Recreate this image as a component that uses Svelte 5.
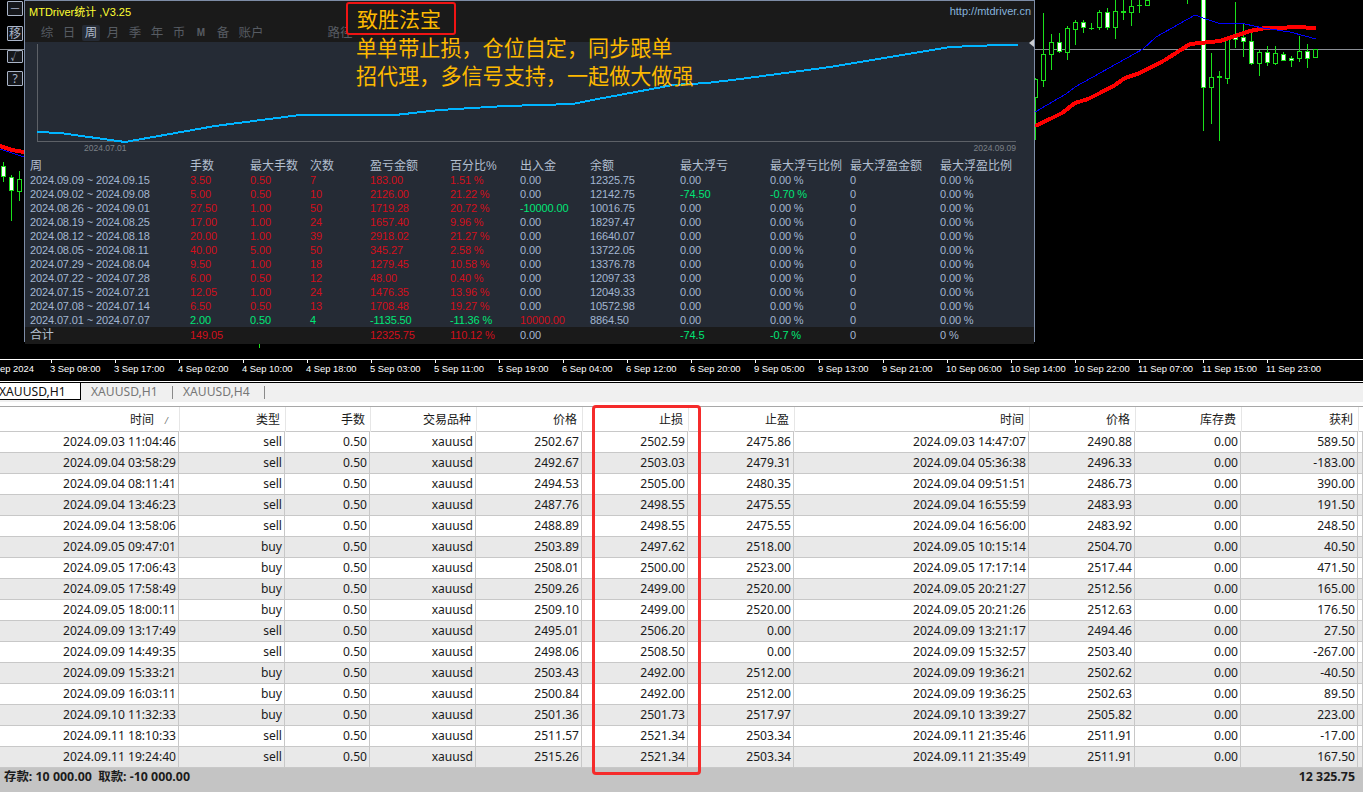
<script>
  const candles = [
    [3,162,182,166,176,1],[11,175,221,177,190,1],[19,171,201,179,191,0],
    [251,342,344,0,0,3],[259,342,348,0,0,3],
    [1035,78,140,79,97,0],[1043,13,87,54,80,0],[1051,34,70,42,54,0],[1059,33,53,42,51,1],
    [1067,26,60,28,52,0],[1075,20,45,22,29,0],[1083,20,33,22,27,1],[1091,23,30,28,29,2],
    [1099,10,30,12,27,0],[1107,8,30,12,27,1],[1115,0,39,11,27,0],[1123,0,20,11,13,2],
    [1131,0,26,6,12,0],[1139,0,13,5,6,2],[1147,0,6,0,5,0],[1187,0,4,0,0,3],
    [1203,0,131,-2,87,1],[1211,53,124,77,87,0],[1219,71,141,76,78,2],[1227,38,84,39,78,0],
    [1235,2,48,37,39,1],[1243,24,57,37,41,1],[1251,30,65,41,63,1],[1259,50,76,52,63,0],
    [1267,46,66,52,62,1],[1275,46,65,53,63,0],[1283,52,61,54,60,1],[1291,56,67,58,60,1],
    [1299,36,62,51,58,0],[1307,44,68,51,58,1],[1315,49,58,49,57,0]
  ];
  const red = '1035,126 1050,119 1062,113 1075,103 1088,99 1100,93 1115,85 1125,78 1140,73 1165,60 1190,44 1200,43 1220,41 1235,36 1250,31 1265,28 1280,28 1295,27 1316,28';
  const blue = '1035,112 1066,94 1075,87 1143,49 1156,37 1195,15 1203,18 1218,23 1245,24 1263,28 1290,32 1316,39';
  const equity = '12,90 35,91 100,100 190,84 275,73 370,73 415,68 480,64 548,62 562,59 632,46 648,43 682,41 715,37 805,25 865,15 925,5 975,3 993,3';

  const navs = ['综','日','周','月','季','年','币','M','备','账户'];
  const heads = ['周','手数','最大手数','次数','盈亏金额','百分比%','出入金','余额','最大浮亏','最大浮亏比例','最大浮盈金额','最大浮盈比例'];
  const weeks = [
    ['2024.09.09 ~ 2024.09.15','3.50','0.50','7','183.00','1.51 %','0.00','12325.75','0.00','0.00 %'],
    ['2024.09.02 ~ 2024.09.08','5.00','0.50','10','2126.00','21.22 %','0.00','12142.75','-74.50','-0.70 %'],
    ['2024.08.26 ~ 2024.09.01','27.50','1.00','50','1719.28','20.72 %','-10000.00','10016.75','0.00','0.00 %'],
    ['2024.08.19 ~ 2024.08.25','17.00','1.00','24','1657.40','9.96 %','0.00','18297.47','0.00','0.00 %'],
    ['2024.08.12 ~ 2024.08.18','20.00','1.00','39','2918.02','21.27 %','0.00','16640.07','0.00','0.00 %'],
    ['2024.08.05 ~ 2024.08.11','40.00','5.00','50','345.27','2.58 %','0.00','13722.05','0.00','0.00 %'],
    ['2024.07.29 ~ 2024.08.04','9.50','1.00','18','1279.45','10.58 %','0.00','13376.78','0.00','0.00 %'],
    ['2024.07.22 ~ 2024.07.28','6.00','0.50','12','48.00','0.40 %','0.00','12097.33','0.00','0.00 %'],
    ['2024.07.15 ~ 2024.07.21','12.05','1.00','24','1476.35','13.96 %','0.00','12049.33','0.00','0.00 %'],
    ['2024.07.08 ~ 2024.07.14','6.50','0.50','13','1708.48','19.27 %','0.00','10572.98','0.00','0.00 %'],
    ['2024.07.01 ~ 2024.07.07','2.00','0.50','4','-1135.50','-11.36 %','10000.00','8864.50','0.00','0.00 %']
  ];
  const tone = (w, i, v) => {
    if (i >= 1 && i <= 5) return w === 10 ? 'green' : 'red';
    if (i === 6) return v.startsWith('-') ? 'green' : v === '0.00' ? 'val' : 'red';
    if (i >= 8) return v.startsWith('-') ? 'green' : 'val';
    return 'val';
  };
  const total = ['合计','149.05','','','12325.75','110.12 %','0.00','','-74.5','-0.7 %','0','0 %'];
  const totalTone = ['val','red','','','red','red','val','','green','green','val','val'];

  const ticks = ['3 Sep 2024','3 Sep 09:00','3 Sep 17:00','4 Sep 02:00','4 Sep 10:00','4 Sep 18:00','5 Sep 03:00','5 Sep 11:00','5 Sep 19:00','6 Sep 04:00','6 Sep 12:00','6 Sep 20:00','9 Sep 05:00','9 Sep 13:00','9 Sep 21:00','10 Sep 06:00','10 Sep 14:00','10 Sep 22:00','11 Sep 07:00','11 Sep 15:00','11 Sep 23:00'];

  const cols = ['时间','类型','手数','交易品种','价格','止损','止盈','时间','价格','库存费','获利'];
  const t = (a,b,c,d,e,f,g,h,i) => ['2024.'+a,b,'0.50','xauusd',c,d,e,'2024.'+f,g,'0.00',h];
  const trades = [
    t('09.03 11:04:46','sell','2502.67','2502.59','2475.86','09.03 14:47:07','2490.88','589.50'),
    t('09.04 03:58:29','sell','2492.67','2503.03','2479.31','09.04 05:36:38','2496.33','-183.00'),
    t('09.04 08:11:41','sell','2494.53','2505.00','2480.35','09.04 09:51:51','2486.73','390.00'),
    t('09.04 13:46:23','sell','2487.76','2498.55','2475.55','09.04 16:55:59','2483.93','191.50'),
    t('09.04 13:58:06','sell','2488.89','2498.55','2475.55','09.04 16:56:00','2483.92','248.50'),
    t('09.05 09:47:01','buy','2503.89','2497.62','2518.00','09.05 10:15:14','2504.70','40.50'),
    t('09.05 17:06:43','buy','2508.01','2500.00','2523.00','09.05 17:17:14','2517.44','471.50'),
    t('09.05 17:58:49','buy','2509.26','2499.00','2520.00','09.05 20:21:27','2512.56','165.00'),
    t('09.05 18:00:11','buy','2509.10','2499.00','2520.00','09.05 20:21:26','2512.63','176.50'),
    t('09.09 13:17:49','sell','2495.01','2506.20','0.00','09.09 13:21:17','2494.46','27.50'),
    t('09.09 14:49:35','sell','2498.06','2508.50','0.00','09.09 15:32:57','2503.40','-267.00'),
    t('09.09 15:33:21','buy','2503.43','2492.00','2512.00','09.09 19:36:21','2502.62','-40.50'),
    t('09.09 16:03:11','buy','2500.84','2492.00','2512.00','09.09 19:36:25','2502.63','89.50'),
    t('09.10 11:32:33','buy','2501.36','2501.73','2517.97','09.10 13:39:27','2505.82','223.00'),
    t('09.11 18:10:33','sell','2511.57','2521.34','2503.34','09.11 21:35:46','2511.91','-17.00'),
    t('09.11 19:24:40','sell','2515.26','2521.34','2503.34','09.11 21:35:49','2511.91','167.50')
  ];
</script>

<div class="page">
  <section class="chart">
    <svg class="plot" width="1363" height="360" shape-rendering="crispEdges">
      <line x1="0" y1="49.5" x2="1363" y2="49.5" stroke="#8b8f96" />
      <polyline points="0,146 12,150 24,152" class="ma-red" />
      <polyline points="0,149 12,153 24,157" class="ma-blue" />
      {#each candles as c}
        <line x1={c[0] + .5} y1={c[1]} x2={c[0] + .5} y2={c[2]} stroke="#1be01b" />
        {#if c[5] === 2}
          <rect x={c[0] - 2} y={c[3]} width="5" height={c[4] - c[3]} fill="#1be01b" />
        {:else if c[5] !== 3}
          <rect x={c[0] - 1.5} y={c[3] + .5} width="4" height={c[4] - c[3]} fill={c[5] ? '#fff' : '#000'} stroke="#1be01b" />
        {/if}
      {/each}
      <polyline points={red} class="ma-red" />
      <polyline points={blue} class="ma-blue" />
    </svg>

    <div class="tools">
      <span class="tool">一</span>
      <span class="tool">移</span>
      <span class="tool">√</span>
      <span class="tool">?</span>
    </div>

    <div class="panel">
      <header class="titlebar">
        <span class="title">MTDriver统计 ,V3.25</span>
        <span class="url">http://mtdriver.cn</span>
      </header>
      <nav class="nav">
        {#each navs as n}
          <span class="nav-item" class:on={n === '周'} class:m={n === 'M'}>{n}</span>
        {/each}
        <span class="nav-item path">路径</span>
      </nav>
      <div class="graph">
        <svg width="1000" height="112" shape-rendering="crispEdges">
          <path d="M12.5 2V99.5H991" fill="none" stroke="#5d6167" />
          <polyline points={equity} fill="none" stroke="#00b4ff" stroke-width="2" />
        </svg>
        <span class="date d1">2024.07.01</span>
        <span class="date d2">2024.09.09</span>
      </div>
      <div class="stats">
        <div class="srow shead">
          {#each heads as h}<span>{h}</span>{/each}
        </div>
        {#each weeks as w, wi}
          <div class="srow">
            {#each w as v, i}<span class={tone(wi, i, v)}>{v}</span>{/each}
            <span class="val">0</span><span class="val">0.00 %</span>
          </div>
        {/each}
        <div class="srow total">
          {#each total as v, i}<span class={totalTone[i]} class:label={i === 0}>{v}</span>{/each}
        </div>
      </div>
      <span class="marker"></span>
    </div>

    <div class="promo">
      <div class="promo-box">致胜法宝</div>
      <p>单单带止损，仓位自定，同步跟单</p>
      <p>招代理，多信号支持，一起做大做强</p>
    </div>
  </section>

  <div class="axis">
    {#each ticks as k}<span class="tick">{k}</span>{/each}
  </div>

  <div class="tabs">
    <span class="tab active">XAUUSD,H1</span>
    <span class="tab">XAUUSD,H1</span>
    <span class="tab">XAUUSD,H4</span>
  </div>

  <section class="table">
    <div class="thead">
      {#each cols as c, i}
        <span class="th">{c}{#if i === 0}<i class="sort">/</i>{/if}</span>
      {/each}
      <span class="th"></span>
    </div>
    {#each trades as r}
      <div class="tr">
        {#each r as v}<span class="td">{v}</span>{/each}
        <span class="td"></span>
      </div>
    {/each}
    <div class="highlight"></div>
  </section>

  <footer class="status">
    <span>存款: 10 000.00&nbsp;&nbsp;取款: -10 000.00</span>
    <span>12 325.75</span>
  </footer>
</div>

<style>
  :global(body) { margin: 0; background: #fff; }
  .page { width: 1363px; height: 792px; overflow: hidden; display: flex; flex-direction: column; font-family: "Noto Sans", "Noto Sans CJK SC", sans-serif; }

  .chart { position: relative; height: 359px; background: #000; overflow: hidden; flex: none; }
  .plot { position: absolute; left: 0; top: 0; }
  .ma-red { fill: none; stroke: #ff0000; stroke-width: 4; }
  .ma-blue { fill: none; stroke: #0000ff; stroke-width: 1; }

  .tools { position: absolute; left: 7px; top: 1px; width: 16px; height: 85px; }
  .tool { position: absolute; left: 0; width: 14px; height: 13px; border: 1px solid #aab5c8; border-radius: 1px; background: #15171b; color: #aab5c8; font-size: 12px; line-height: 13px; text-align: center; overflow: hidden; }
  .tool:nth-child(1) { top: 0; font-size: 9px; }
  .tool:nth-child(2) { top: 25px; }
  .tool:nth-child(3) { top: 49px; height: 11px; line-height: 11px; font-size: 9px; }
  .tool:nth-child(4) { top: 70px; }

  .panel { position: absolute; left: 24px; top: 0; width: 1009px; height: 340px; border: 1px solid #7d8ca6; background: #252b35; display: flex; flex-direction: column; font-family: "Liberation Sans", "Noto Sans CJK SC", sans-serif; }
  .titlebar { height: 20px; background: #1a1a1a; display: flex; justify-content: space-between; align-items: center; padding: 0 3px 0 4px; flex: none; font-size: 11px; }
  .title { color: #ffff33; }
  .url { color: #86b3dc; font-size: 11px; }
  .nav { box-sizing: border-box; height: 21px; padding-top: 3px; background: #1a1a1a; display: flex; align-items: center; padding-left: 13px; flex: none; font-size: 12.5px; color: #575c63; }
  .nav-item { width: 18px; margin-right: 4px; height: 16px; line-height: 16px; text-align: center; border-radius: 2px; }
  .nav-item.on { background: #252b35; color: #aeb9c9; }
  .nav-item.m { font-size: 10px; font-weight: 700; }
  .nav-item:nth-last-child(2) { width: 30px; }
  .path { width: 30px; margin-left: 55px; }

  .graph { position: relative; height: 112px; flex: none; }
  .graph svg { position: absolute; left: 0; top: 0; }
  .date { position: absolute; top: 101px; font-size: 8.5px; color: #7b8087; }
  .d1 { left: 59px; }
  .d2 { right: 18px; }

  .stats { flex: 1; display: flex; flex-direction: column; font-size: 11px; margin-top: 5px; letter-spacing: -.13px; }
  .srow { display: grid; grid-template-columns: 160px 60px 60px 60px 80px 70px 70px 90px 90px 80px 90px 1fr; height: 14px; line-height: 14px; padding-left: 5px; white-space: nowrap; }
  .shead { font-size: 12px; color: #b3bfcf; letter-spacing: 0; }
  .val { color: #a3b6d1; }
  .red { color: #d10f1c; }
  .green { color: #00e676; }
  .total { background: #1a1a1a; flex: 1; line-height: 17px; }
  .label { font-size: 12px; color: #b3bfcf; }
  .marker { position: absolute; right: 0; top: 38px; border: 4px solid transparent; border-right: 5px solid #c9ccd2; border-left: 0; }

  .promo { position: absolute; left: 346px; top: 2px; color: #fdb900; font-family: "Noto Sans CJK SC", sans-serif; font-size: 21.1px; }
  .promo-box { width: 97px; height: 29px; line-height: 29px; padding-left: 9px; border: 2px solid #f01414; border-radius: 3px; background: #1a1a1a; font-size: 21px; }
  .promo p { margin: 0 0 0 10px; height: 28px; line-height: 28px; white-space: nowrap; }
  .promo-box + p { margin-top: -2px; }

  .axis { height: 21px; flex: none; background: #000; border-top: 1px solid #fff; display: flex; overflow: hidden; color: #fff; font-family: "Liberation Sans", sans-serif; font-size: 9.4px; line-height: 17px; }
  .tick { position: relative; flex: none; width: 64px; white-space: nowrap; }
  .tick:first-child { margin-left: -14px; }
  .tick::before { content: ""; position: absolute; left: 1px; top: 0; width: 1px; height: 3px; background: #fff; }

  .tabs { height: 19px; flex: none; background: #f0f0f0; border-top: 1px solid #fff; box-shadow: inset 0 1px 0 #000; padding-top: 1px; display: flex; font-size: 12.1px; line-height: 18px; color: #777; }
  .tab { box-sizing: border-box; width: 92px; height: 18px; padding-left: 10px; position: relative; }
  .tab::after { content: ""; position: absolute; right: 0; top: 3px; height: 13px; width: 1px; background: #8a8a8a; }
  .tab.active { width: 81px; padding-left: 0; background: #fff; color: #111; border-right: 1px solid #000; border-bottom: 1px solid #000; border-top: 1px solid #000; margin-top: -1px; text-indent: -1px; }
  .tab.active::after { display: none; }

  .table { position: relative; margin-top: 4px; flex: none; color: #1a1a1a; font-size: 12.1px; }
  .thead, .tr { display: grid; }
  .thead { grid-template-columns: 180px 106px 85px 106px 106px 106px 106px 235px 106px 106px 117px 1fr; height: 24px; border-top: 1px solid #a8a8a8; border-bottom: 1px solid #c8c8c8; background: #fff; font-size: 12px; }
  .tr { grid-template-columns: 179px 106px 85px 106px 106px 106px 106px 235px 106px 106px 117px 1fr; height: 20px; border-bottom: 1px solid #c8c8c8; line-height: 20px; }
  .tr:nth-child(odd) { background: #e9e9e9; }
  .th { box-sizing: border-box; border-right: 1px solid #e6e6e6; text-align: right; padding-right: 5px; line-height: 25px; position: relative; }
  .th:first-child { padding-right: 25px; }
  .sort { position: absolute; right: 11px; top: 1px; font-size: 9px; color: #777; }
  .td { box-sizing: border-box; border-right: 1px solid #c8c8c8; text-align: right; padding-right: 2px; white-space: nowrap; }
  .highlight { position: absolute; left: 592px; top: -1px; width: 103px; height: 364px; border: 3px solid #f52b2b; border-radius: 4px; z-index: 2; }

  .status { flex: 1; margin-top: -1px; background: #c4c4c4; display: flex; justify-content: space-between; padding: 0 8px 0 4px; font-size: 12.4px; font-weight: 700; color: #1c1c1c; line-height: 20px; }
</style>
